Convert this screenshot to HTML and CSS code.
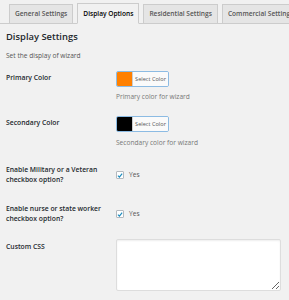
FILE: index.html
```html
<!DOCTYPE html>
<html lang="en">
<head>
  <meta charset="UTF-8">
  <title>Display Options</title>
  <link rel="stylesheet" href="styles.css">
</head>
<body>
  <div class="wrap">
    <h2 class="nav-tabs">
      <a class="nav-tab" href="#">General Settings</a>
      <a class="nav-tab active" href="#">Display Options</a>
      <a class="nav-tab" href="#">Residential Settings</a>
      <a class="nav-tab" href="#">Commercial Settings</a>
    </h2>

    <h3 class="title">Display Settings</h3>
    <p class="intro">Set the display of wizard</p>

    <div class="row row-primary">
      <label class="label">Primary Color</label>
      <div class="field">
        <button type="button" class="color-btn">
          <span class="swatch orange"></span>
          <span class="btn-text">Select Color</span>
        </button>
        <p class="desc">Primary color for wizard</p>
      </div>
    </div>

    <div class="row row-secondary">
      <label class="label">Secondary Color</label>
      <div class="field">
        <button type="button" class="color-btn">
          <span class="swatch black"></span>
          <span class="btn-text">Select Color</span>
        </button>
        <p class="desc">Secondary color for wizard</p>
      </div>
    </div>

    <div class="row row-check">
      <label class="label">Enable Military or a Veteran checkbox option?</label>
      <div class="field check">
        <span class="box">
          <svg viewBox="0 0 10 10" width="7" height="7"><path d="M1.5 5.2 L4 7.6 L8.6 1.8" fill="none" stroke="#1e8cbe" stroke-width="2"/></svg>
        </span>
        <span class="yes">Yes</span>
      </div>
    </div>

    <div class="row row-check2">
      <label class="label">Enable nurse or state worker checkbox option?</label>
      <div class="field check">
        <span class="box">
          <svg viewBox="0 0 10 10" width="7" height="7"><path d="M1.5 5.2 L4 7.6 L8.6 1.8" fill="none" stroke="#1e8cbe" stroke-width="2"/></svg>
        </span>
        <span class="yes">Yes</span>
      </div>
    </div>

    <div class="row row-css">
      <label class="label">Custom CSS</label>
      <div class="field">
        <textarea class="css-box"></textarea>
      </div>
    </div>
  </div>
</body>
</html>
```

FILE: styles.css
```css
* {
  margin: 0;
  padding: 0;
  box-sizing: border-box;
}

body {
  background: #f1f1f1;
  font-family: "Open Sans", "Noto Sans", sans-serif;
  color: #23282d;
  width: 289px;
  height: 300px;
  overflow: hidden;
}

.wrap {
  padding: 0 0 0 6px;
}

/* tabs */
.nav-tabs {
  display: flex;
  align-items: flex-end;
  height: 24px;
  padding-top: 4px;
  border-bottom: 1px solid #ccc;
  margin-left: -6px;
  padding-left: 9px;
  font-weight: 600;
  white-space: nowrap;
}

.nav-tab {
  display: block;
  height: 20px;
  line-height: 18px;
  padding: 0 5px;
  margin-right: 4px;
  margin-bottom: -1px;
  font-size: 6.6px;
  color: #555;
  text-decoration: none;
  background: #e5e5e5;
  border: 1px solid #ccc;
}

.nav-tab.active {
  background: #f1f1f1;
  border-bottom-color: #f1f1f1;
  color: #000;
  height: 21px;
  line-height: 20px;
}

.title {
  font-size: 9.4px;
  font-weight: 600;
  line-height: 13px;
  margin-top: 6px;
}

.intro {
  font-size: 6.6px;
  line-height: 10px;
  margin-top: 8px;
  color: #555;
}

/* rows */
.row {
  display: flex;
  align-items: flex-start;
}

.label {
  width: 110px;
  padding-right: 12px;
  font-size: 6.8px;
  font-weight: 600;
  line-height: 10px;
}

.field {
  flex: 1;
}

.row-primary {
  margin-top: 10px;
}

.row-primary .label {
  margin-top: 2px;
}

.row-secondary {
  margin-top: 14px;
}

.row-secondary .label {
  margin-top: 2px;
}

.color-btn {
  display: flex;
  align-items: stretch;
  height: 16px;
  width: 53px;
  border: 1px solid #8cbbe3;
  border-radius: 2px;
  background: #f7f7f7;
  overflow: hidden;
  cursor: pointer;
}

.swatch {
  width: 16px;
  border-right: 1px solid #ccc;
}

.swatch.orange {
  background: #ff8000;
}

.swatch.black {
  background: #000;
}

.btn-text {
  flex: 1;
  font-family: "Open Sans", sans-serif;
  font-size: 5.6px;
  line-height: 14px;
  color: #555;
  text-align: center;
  background: #fafafa;
}

.desc {
  font-size: 6.6px;
  line-height: 10px;
  color: #777;
  margin-top: 5px;
}

.row-secondary .desc {
  margin-top: 6px;
}

.row-check {
  margin-top: 17px;
}

.row-check2 {
  margin-top: 19px;
}

.row-check2 .label {
  line-height: 9.5px;
}

.check {
  display: flex;
  align-items: center;
  gap: 5px;
  padding-top: 5px;
}

.box {
  display: flex;
  align-items: center;
  justify-content: center;
  width: 8px;
  height: 8px;
  background: #fff;
  border: 1px solid #b4b9be;
  border-radius: 1px;
}

.yes {
  font-size: 6.6px;
  line-height: 10px;
  color: #555;
}

.row-css {
  margin-top: 16px;
}

.row-css .label {
  margin-top: 3px;
}

.css-box {
  display: block;
  width: 165px;
  height: 52px;
  background: #fff;
  border: 1px solid #ddd;
  border-radius: 2px;
  box-shadow: inset 0 1px 2px rgba(0, 0, 0, 0.07);
}
```
